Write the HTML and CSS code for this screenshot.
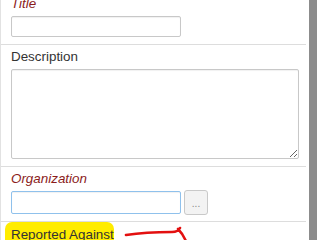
FILE: index.html
```html
<!DOCTYPE html>
<html>
<head>
<meta charset="utf-8">
<link rel="stylesheet" href="styles.css">
</head>
<body>
<div class="page">
  <div class="panel">
    <div class="row first">
      <div class="label req">Title</div>
      <input class="field short" type="text">
    </div>
    <div class="row">
      <div class="label">Description</div>
      <textarea class="area"></textarea>
    </div>
    <div class="row">
      <div class="label req">Organization</div>
      <div class="pick">
        <input class="field short focus" type="text">
        <button class="dots">...</button>
      </div>
    </div>
    <div class="row last">
      <span class="mark">Reported Against</span>
      <svg class="arrow" width="80" height="20" viewBox="0 0 80 20">
        <path d="M2 11 C 15 9, 35 8, 48 8 C 52 8, 55 6, 56 4 M 54 5 C 58 9, 61 14, 63 20" fill="none" stroke="#e31010" stroke-width="2.6" stroke-linecap="round"/>
      </svg>
    </div>
  </div>
  <div class="scroll"></div>
</div>
</body>
</html>
```
FILE: styles.css
```css
html, body {
  margin: 0;
  padding: 0;
  background: #fff;
  overflow: hidden;
}
.page {
  display: flex;
  width: 320px;
  height: 240px;
  overflow: hidden;
  font-family: "Liberation Sans", Arial, sans-serif;
  font-size: 13.4px;
  color: #333;
}
.panel {
  width: 305px;
  border-left: 1px solid #e2e2e2;
  display: flex;
  flex-direction: column;
}
.row {
  border-top: 1px solid #ddd;
  padding: 3px 0 7px 10px;
}
.row.first {
  border-top: none;
  margin-top: -8px;
}
.label {
  height: 17px;
  line-height: 17px;
  margin-bottom: 4px;
}
.label.req {
  font-style: italic;
  color: #8b1c1c;
}
.field {
  box-sizing: border-box;
  display: block;
  width: 170px;
  height: 21px;
  margin: 0;
  padding: 2px 4px;
  border: 1px solid #c8c8c8;
  border-radius: 2px;
  box-shadow: inset 0 1px 1px rgba(0,0,0,0.06);
  background: #fff;
  outline: none;
}
.area {
  box-sizing: border-box;
  display: block;
  width: 288px;
  height: 90px;
  margin: 0;
  border: 1px solid #c8c8c8;
  border-radius: 2px;
  box-shadow: inset 0 1px 1px rgba(0,0,0,0.06);
  resize: both;
  outline: none;
}
.pick {
  display: flex;
  align-items: center;
  gap: 3px;
  height: 23px;
}
.field.focus {
  height: 23px;
  border-color: #8fc1ec;
}
.dots {
  box-sizing: border-box;
  width: 24px;
  height: 25px;
  margin: 0;
  padding: 0;
  border: 1px solid #c9c9c9;
  border-radius: 3px;
  background: #f3f3f3;
  color: #888;
  font-family: "Liberation Sans", Arial, sans-serif;
  font-size: 10px;
  line-height: 25px;
}
.row.last {
  position: relative;
  padding: 0 0 0 4px;
  height: 30px;
}
.mark {
  display: inline-block;
  background: #ffec00;
  border-radius: 7px 7px 0 0;
  padding: 4px 0 0 6px;
  height: 26px;
  line-height: 17px;
  color: #333;
  font-size: 13.4px;
}
.arrow {
  position: absolute;
  left: 123px;
  top: 2px;
}
.scroll {
  width: 8px;
  margin-left: 3px;
  background: #8c8c8c;
  height: 240px;
}
```
